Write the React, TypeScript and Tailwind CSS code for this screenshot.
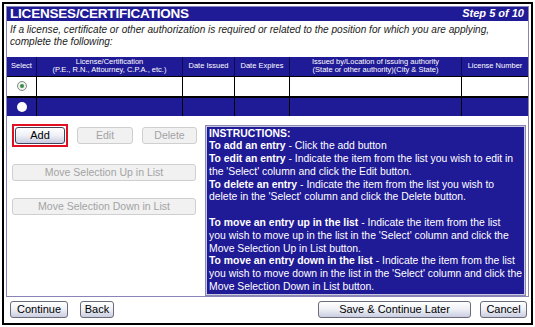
const columns = [
  { w: 'w-[29px]', lines: ['Select'] },
  { w: 'w-[145px]', lines: ['License/Certification', '(P.E., R.N., Attourney, C.P.A., etc.)'] },
  { w: 'w-[51px]', lines: ['Date Issued'] },
  { w: 'w-[54px]', lines: ['Date Expires'] },
  { w: 'w-[171px]', lines: ['Issued by/Location of issuing authority', '(State or other authority)(City & State)'] },
  { w: 'flex-1', lines: ['License Number'] }
];

// lines as they break in the original page
const instructions: [string, string][] = [
  ['INSTRUCTIONS:', ''],
  ['To add an entry', ' - Click the add button'],
  ['To edit an entry', ' - Indicate the item from the list you wish to edit in'],
  ['', "the 'Select' column and click the Edit button."],
  ['To delete an entry', ' - Indicate the item from the list you wish to'],
  ['', "delete in the 'Select' column and click the Delete button."],
  ['', '\u00a0'],
  ['To move an entry up in the list', ' - Indicate the item from the list'],
  ['', "you wish to move up in the list in the 'Select' column and click the"],
  ['', 'Move Selection Up in List button.'],
  ['To move an entry down in the list', ' - Indicate the item from the list'],
  ['', "you wish to move down in the list in the 'Select' column and click the"],
  ['', 'Move Selection Down in List button.']
];

const btn =
  'flex h-[17px] items-center justify-center rounded-[3px] border border-[#6b6b7a] bg-gradient-to-b from-white via-[#eef0f6] to-[#c9cde0] text-[11px] leading-none text-black';
const off =
  'flex h-[17px] items-center justify-center rounded-[3px] border border-[#cfcfcf] bg-[#f1f1f1] text-[10.5px] leading-none text-[#a3a3a3]';

function Radio({ checked, dark }: { checked?: boolean; dark?: boolean }) {
  return (
    <span
      className={
        dark
          ? 'h-[10px] w-[10px] rounded-full bg-white'
          : 'flex h-[10px] w-[10px] items-center justify-center rounded-full border border-[#7a8a80] bg-[#eef2ee]'
      }
    >
      {checked && <span className="h-[4px] w-[4px] rounded-full bg-[#3a8a4a]" />}
    </span>
  );
}

export default function App() {
  return (
    <div className="h-[327px] w-[535px] bg-white p-[2px] font-['Liberation_Sans',Arial,sans-serif]">
      <div className="flex h-full flex-col border-2 border-black p-[2px]">
        <div className="flex h-[291px] flex-col border border-[#8884b8] bg-white">
          <div className="flex h-[16px] items-center justify-between bg-[#1f1a96] pl-[3px] pr-[4px] text-white">
            <span className="text-[13.5px] font-bold leading-none tracking-[-0.2px]">LICENSES/CERTIFICATIONS</span>
            <span className="text-[11px] font-bold italic leading-none">Step 5 of 10</span>
          </div>
          <p className="mt-[3px] px-[3px] text-[10.1px] italic leading-[12px] text-[#222]">
            If a license, certificate or other authorization is required or related to the position for which you are applying,
            complete the following:
          </p>

          <div className="mt-[9px] flex flex-col bg-black">
            <div className="flex h-[19px] gap-[1px] bg-[#0c0a50]">
              {columns.map((c) => (
                <div
                  key={c.lines[0]}
                  className={`${c.w} flex flex-col items-center justify-center bg-[#1f1a96] text-center text-[7.5px] leading-[8px] text-white`}
                >
                  {c.lines.map((l) => (
                    <span key={l}>{l}</span>
                  ))}
                </div>
              ))}
            </div>
            <div className="mt-[1px] flex h-[19px] gap-[1px]">
              {columns.map((c, i) => (
                <div key={c.lines[0]} className={`${c.w} flex items-center justify-center bg-white`}>
                  {i === 0 && <Radio checked />}
                </div>
              ))}
            </div>
            <div className="mt-[2px] flex h-[18px] gap-[1px]">
              {columns.map((c, i) => (
                <div key={c.lines[0]} className={`${c.w} flex items-center justify-center bg-[#1f1a96]`}>
                  {i === 0 && <Radio dark />}
                </div>
              ))}
            </div>
          </div>

          <div className="flex flex-1 gap-[4px] pb-[2px] pl-[5px] pr-[3px] pt-[8px]">
            <div className="flex w-[190px] flex-col gap-[17px]">
              <div className="flex items-center">
                <div className="border-2 border-[#e01020] p-[1px]">
                  <button className={`${btn} w-[50px] border-[#44445a] from-white to-[#c4c4dc]`}>Add</button>
                </div>
                <button className={`${off} ml-[9px] w-[56px]`}>Edit</button>
                <button className={`${off} ml-[9px] w-[55px]`}>Delete</button>
              </div>
              <button className={`${off} w-[184px]`}>Move Selection Up in List</button>
              <button className={`${off} w-[184px]`}>Move Selection Down in List</button>
            </div>
            <div className="mt-[2px] flex flex-1 flex-col overflow-hidden border border-[#c8c8e0] bg-[#1f1a96] px-[2px] pt-[1px] text-[10.4px] leading-[12.8px] text-white outline outline-1 outline-[#8a88b0]">
              {instructions.map(([b, t], i) => (
                <div key={i} className="whitespace-nowrap">
                  {b && <span className="font-bold">{b}</span>}
                  {t}
                </div>
              ))}
            </div>
          </div>
        </div>

        <div className="flex flex-1 items-center pl-[4px] pr-[2px]">
          <button className={`${btn} w-[58px]`}>Continue</button>
          <button className={`${btn} ml-[12px] w-[34px]`}>Back</button>
          <button className={`${btn} ml-auto w-[153px]`}>Save &amp; Continue Later</button>
          <button className={`${btn} ml-[9px] w-[47px]`}>Cancel</button>
        </div>
      </div>
    </div>
  );
}
